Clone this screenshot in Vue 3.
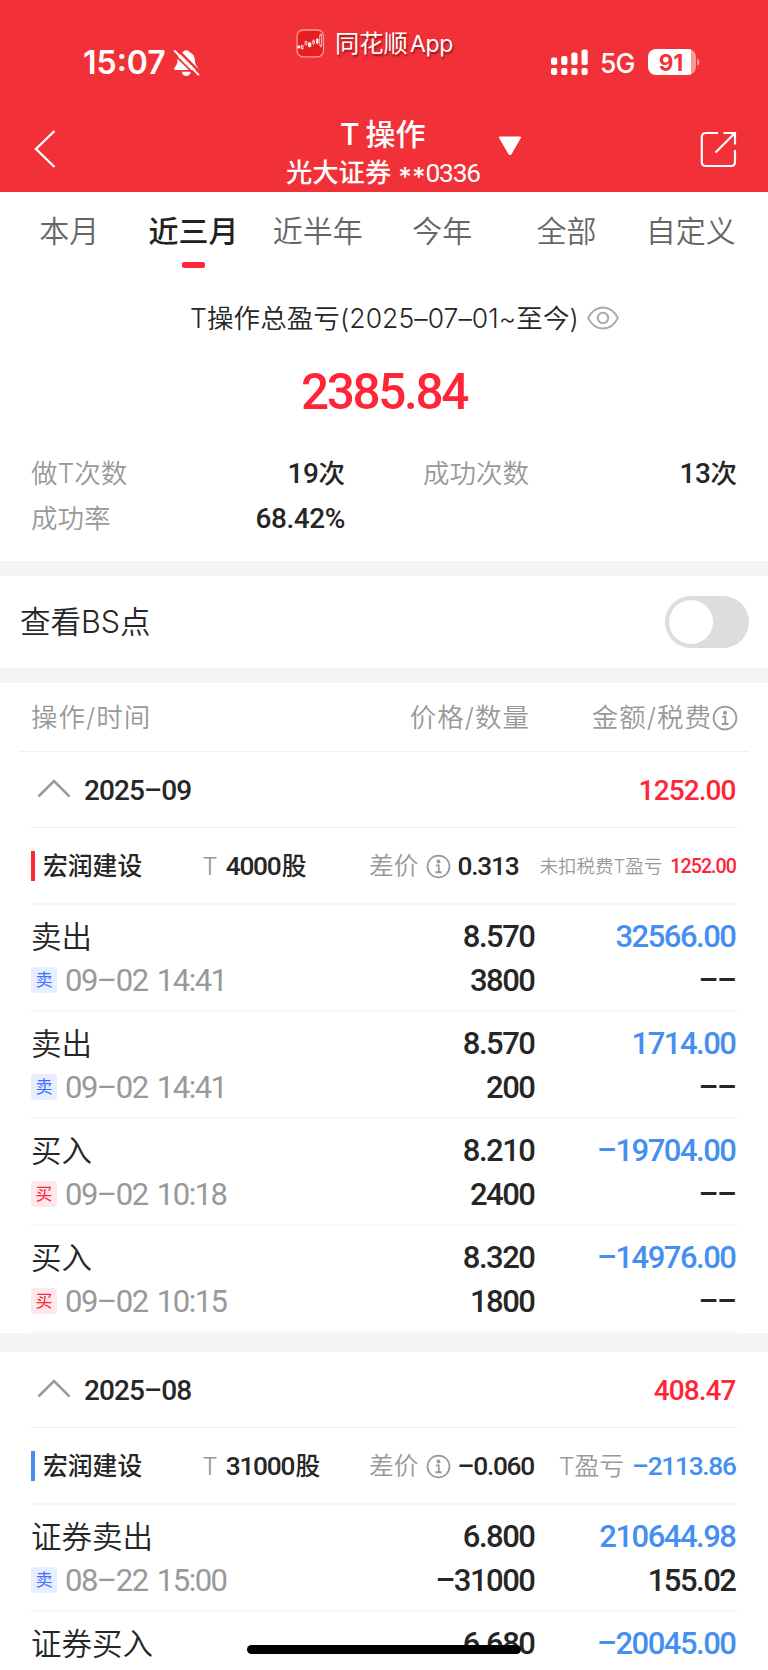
<template>
  <div class="page">
    <header class="header">
      <div class="status">
        <div class="status-left">
          <span class="clock">15:07</span>
          <svg class="bell" width="27" height="28" viewBox="0 0 27 28">
            <path d="M13.2 1.2c-2.3 0-3 1.3-3.4 2.1-3.5 1.2-5.2 4.3-5.3 8-.1 3.600-1 5-2.700 7-.9 1-1.100 2.700.4 2.700h22c1.500 0 1.300-1.700.4-2.700-1.700-2-2.600-3.400-2.700-7-.1-3.700-1.800-6.800-5.300-8-.4-.8-1.100-2.100-3.400-2.100z" fill="#fff" />
            <path d="M8.800 22.800h9c-.6 2.900-2.300 4.200-4.500 4.200s-3.900-1.300-4.500-4.200z" fill="#fff" />
            <path d="M3.400-.4 28 24.200" stroke="#f23038" stroke-width="2.400" />
            <path d="M1.700 2 25.400 25.600" stroke="#fff" stroke-width="2" stroke-linecap="round" />
            <path d="M-.2 3.800 23.700 27.700" stroke="#f23038" stroke-width="1.800" />
          </svg>
        </div>
        <div class="status-app">
          <svg width="29" height="29" viewBox="0 0 29 29">
            <rect x="1" y="1" width="26.500" height="26.800" rx="6" fill="#e81e20" stroke="#f99a9c" stroke-width="1.300" />
            <g fill="#fff" stroke="#fff" stroke-width=".7">
              <rect x="1.800" y="17" width="2.200" height="2" />
              <path d="M6.300 15.500v5.200M10 11.500v5M13.700 13v5.500M17.600 10.500v5.500M21.200 9v6.500M24.800 4.500v14" />
              <rect x="5.500" y="17" width="1.600" height="2.400" fill="#e81e20" />
              <rect x="9" y="12.800" width="2" height="2.600" fill="#e81e20" />
              <rect x="12.500" y="14" width="2.400" height="3.300" />
              <rect x="16.700" y="12" width="1.800" height="2.600" fill="#e81e20" />
              <rect x="20.400" y="10.500" width="1.700" height="3.500" />
              <rect x="23.800" y="6" width="2" height="10.500" fill="#e81e20" />
            </g>
          </svg>
          <span>同花顺<i>App</i></span>
        </div>
        <div class="status-right">
          <svg width="38" height="27" viewBox="0 0 38 27" fill="#fff">
            <rect x="0" y="8.500" width="6.200" height="7.500" rx="2" />
            <rect x="10.200" y="7" width="6.200" height="9" rx="2" />
            <rect x="20.300" y="3.500" width="6.200" height="12.500" rx="2" />
            <rect x="30.500" y=".5" width="6.200" height="15.500" rx="2" />
            <rect v-for="x in [0, 10.2, 20.3, 30.5]" :key="x" :x="x" y="19" width="6.200" height="7" rx="2" />
          </svg>
          <span class="network">5G</span>
          <div class="battery"><span>91</span></div>
          <svg class="cap" width="4" height="8" viewBox="0 0 4 8"><path d="M0 .5c3.300 1 3.300 6 0 7z" fill="#f9989b" /></svg>
        </div>
      </div>
      <div class="nav">
        <svg class="back" width="22" height="40" viewBox="0 0 22 40">
          <path d="M20.500 2 2 20l18.500 18" fill="none" stroke="#fff" stroke-width="2.300" />
        </svg>
        <div class="nav-title">
          <div class="title">T 操作</div>
          <div class="account">光大证券 <i>**</i><b class="num">0336</b></div>
        </div>
        <svg class="arrow" width="24" height="20" viewBox="0 0 24 20">
          <path d="M2 1.500h20L12.500 18h-1z" fill="#fff" stroke="#fff" stroke-width="2" stroke-linejoin="round" />
        </svg>
        <svg class="share" width="37" height="37" viewBox="0 0 37 37" fill="none" stroke="#fff" stroke-width="2.200">
          <path d="M18 2H6Q1.800 2 1.800 6v25q0 4 4 4H31q4 0 4-4V19" />
          <path d="M23.500 2H35v11.500M35 2 15.500 21.500" />
        </svg>
      </div>
    </header>

    <nav class="tabs">
      <div v-for="tab in tabs" :key="tab" :class="['tab', { active: tab === current }]" @click="current = tab">
        {{ tab }}
      </div>
    </nav>

    <section class="summary">
      <div class="summary-title">
        <span>T操作总盈亏(2025–07–01~至今)</span>
        <svg width="32" height="24" viewBox="0 0 32 24" fill="none" stroke="#aaa" stroke-width="1.800">
          <path d="M1 12C5 4.500 10 1.500 16 1.500S27 4.500 31 12c-4 7.500-9 10.500-15 10.500S5 19.500 1 12z" stroke-linejoin="round" />
          <circle cx="16" cy="12" r="5.200" stroke-width="2" />
        </svg>
      </div>
      <div class="total num">2385.84</div>
      <div class="stats">
        <div class="stat"><span>做T次数</span><b><span class="num">19</span>次</b></div>
        <div class="stat"><span>成功次数</span><b><span class="num">13</span>次</b></div>
        <div class="stat"><span>成功率</span><b><span class="num">68.42%</span></b></div>
      </div>
    </section>

    <section class="bs">
      <span>查看BS点</span>
      <div :class="['switch', { on: showBs }]" @click="showBs = !showBs"></div>
    </section>

    <div class="thead">
      <span>操作/时间</span>
      <span class="th-price">价格/数量</span>
      <span class="th-amount">金额/税费<svg width="26" height="26" viewBox="0 0 26 26"><use href="#info" /></svg></span>
    </div>

    <section v-for="m in months" :key="m.month" class="month">
      <div class="month-head">
        <svg width="34" height="20" viewBox="0 0 34 20">
          <path d="M1.500 18.500 17 3l15.500 15.500" fill="none" stroke="#999" stroke-width="2.500" />
        </svg>
        <span class="num">{{ m.month }}</span>
        <b class="num">{{ m.total }}</b>
      </div>
      <div class="stock">
        <i :class="['bar', m.color]"></i>
        <span class="stock-name">宏润建设</span>
        <span class="stock-qty"><em>T</em><span class="num">{{ m.qty }}</span>股</span>
        <span class="stock-diff">
          <em>差价</em>
          <svg width="25" height="25" viewBox="0 0 26 26"><use href="#info" /></svg>
          <span class="num">{{ m.diff }}</span>
        </span>
        <span :class="['stock-profit', { small: m.small }]"><em>{{ m.label }}</em><b :class="['num', m.color]">{{ m.profit }}</b></span>
      </div>
      <div v-for="(r, i) in m.records" :key="i" class="record">
        <div class="op">
          <div class="op-name">{{ r.name }}</div>
          <div v-if="r.time" class="op-time"><i :class="['tag', r.buy ? 'buy' : 'sell']">{{ r.buy ? '买' : '卖' }}</i><span class="num">{{ r.time }}</span></div>
        </div>
        <div class="price">
          <div class="num">{{ r.price }}</div>
          <div class="num">{{ r.qty }}</div>
        </div>
        <div class="amount">
          <div class="num blue">{{ r.amount }}</div>
          <div class="num">{{ r.fee }}</div>
        </div>
      </div>
    </section>

    <div class="home-bar"></div>

    <svg class="defs" width="0" height="0">
      <symbol id="info" viewBox="0 0 26 26">
        <circle cx="13" cy="13" r="11.400" fill="none" stroke="#999" stroke-width="1.800" />
        <circle cx="13" cy="7.800" r="2" fill="#999" />
        <path d="M10.200 11.800h3.100v7M9.800 19h6.600" fill="none" stroke="#999" stroke-width="1.900" />
      </symbol>
    </svg>
  </div>
</template>

<script setup>
import { ref } from 'vue'

const tabs = ['本月', '近三月', '近半年', '今年', '全部', '自定义']
const current = ref('近三月')
const showBs = ref(false)

const months = [
  {
    month: '2025–09',
    total: '1252.00',
    color: 'red',
    qty: '4000',
    diff: '0.313',
    label: '未扣税费T盈亏',
    profit: '1252.00',
    small: true,
    records: [
      { name: '卖出', time: '09–02 14:41', price: '8.570', qty: '3800', amount: '32566.00', fee: '––' },
      { name: '卖出', time: '09–02 14:41', price: '8.570', qty: '200', amount: '1714.00', fee: '––' },
      { name: '买入', buy: true, time: '09–02 10:18', price: '8.210', qty: '2400', amount: '–19704.00', fee: '––' },
      { name: '买入', buy: true, time: '09–02 10:15', price: '8.320', qty: '1800', amount: '–14976.00', fee: '––' },
    ],
  },
  {
    month: '2025–08',
    total: '408.47',
    color: 'blue',
    qty: '31000',
    diff: '–0.060',
    label: 'T盈亏',
    profit: '–2113.86',
    records: [
      { name: '证券卖出', time: '08–22 15:00', price: '6.800', qty: '–31000', amount: '210644.98', fee: '155.02' },
      { name: '证券买入', buy: true, price: '6.680', amount: '–20045.00' },
    ],
  },
]
</script>

<style>
html,
body {
  margin: 0;
  overflow: hidden;
}
</style>

<style scoped>
.page {
  position: relative;
  width: 768px;
  height: 1670px;
  overflow: hidden;
  background: #fff;
  color: #262626;
  font-family: Inter, 'Noto Sans CJK SC', sans-serif;
  font-size: 26.500px;
  font-weight: 350;
  line-height: 1;
  white-space: nowrap;
}

i,
em {
  font-style: normal;
}

svg {
  display: block;
  flex: none;
}

.num {
  margin-right: 0.050em;
  font-family: Roboto, 'Noto Sans CJK SC', sans-serif;
  letter-spacing: -0.048em;
}

.red {
  color: #ff2436;
}

.blue {
  color: #448ff0;
}

/* header */
.header {
  height: 191.500px;
  background: #f23038;
  color: #fff;
}

.status {
  display: grid;
  grid-template-columns: 296px 255px 1fr;
  height: 112px;
}

.status-left {
  display: flex;
  align-items: flex-start;
  padding: 47px 0 0 83px;
}

.clock {
  width: 90px;
  font: 600 32px/32px Inter, sans-serif;
}

.bell {
  margin-top: 2px;
}

.status-app {
  display: flex;
  align-items: flex-start;
  padding-top: 29px;
  gap: 10px;
  font-size: 24.300px;
  line-height: 29px;
  font-weight: 400;
  text-shadow: 1px 2px 2px rgba(90, 0, 0, 0.6);
}

.status-app i {
  margin-left: 2px;
  font-size: 23px;
  letter-spacing: -0.300px;
}

.status-right {
  display: flex;
  align-items: flex-start;
  padding-top: 49px;
}

.network {
  width: 48px;
  margin-left: 11px;
  font: 500 26.500px/29px Inter, sans-serif;
  letter-spacing: -1px;
}

.battery {
  width: 48px;
  height: 26px;
  border-radius: 8px;
  background: linear-gradient(90deg, #fff 43px, #f9989b 43px);
  color: #f23038;
  font: 700 22.500px/27px Inter, sans-serif;
  text-align: center;
}

.battery span {
  margin-right: 2px;
}

.cap {
  margin: 9px 0 0 1px;
}

.nav {
  display: flex;
  align-items: flex-start;
}

.back {
  margin: 17px 0 0 34px;
}

.nav-title {
  width: 194px;
  margin: 8px 0 0 230px;
}

.title {
  padding-left: 54px;
  font-size: 30px;
  font-weight: 500;
  line-height: 29px;
  word-spacing: -2px;
}

.account {
  margin-top: 10px;
  font-size: 26.300px;
  font-weight: 500;
  line-height: 28px;
}

.account i {
  vertical-align: -4px;
}

.account b {
  font-weight: 450;
}

.arrow {
  margin: 24px 0 0 18px;
}

.share {
  margin: 19px 0 0 178px;
}

/* tabs */
.tabs {
  display: grid;
  grid-template-columns: repeat(6, 1fr);
  height: 84.500px;
  padding: 0 15px 0 7px;
}

.tab {
  padding-top: 24px;
  color: #666;
  font-size: 30px;
  line-height: 30px;
  text-align: center;
}

.tab.active {
  color: #222;
  font-weight: 500;
}

.tab.active::after {
  content: '';
  display: block;
  width: 23px;
  height: 6px;
  margin: 16.500px auto 0;
  border-radius: 2px;
  background: #ff2436;
}

/* summary */
.summary {
  height: 284.500px;
}

.summary-title {
  display: flex;
  align-items: center;
  height: 84px;
  padding-left: 190px;
}

.summary-title span {
  width: 397px;
  letter-spacing: 0.100px;
}

.total {
  height: 82px;
  padding-left: 301px;
  color: #ff2436;
  font-size: 49.500px;
  font-weight: 500;
  line-height: 64px;
}

.stats {
  display: grid;
  grid-template-columns: 314px 314px;
  column-gap: 78px;
  grid-auto-rows: 45px;
  padding: 9px 31px 0;
}

.stat {
  display: flex;
  align-items: center;
  justify-content: space-between;
}

.stat > span {
  color: #999;
}

.stat b {
  font-weight: 500;
}

.stat .num {
  margin-right: 0;
  font-size: 28px;
  letter-spacing: -0.015em;
}

/* BS switch */
.bs {
  display: flex;
  align-items: center;
  justify-content: space-between;
  height: 92.500px;
  padding: 0 19px 0 20px;
  border-top: 15px solid #f4f4f4;
  border-bottom: 15px solid #f4f4f4;
  font-size: 30.500px;
}

.switch {
  width: 84px;
  height: 52px;
  padding: 4px;
  box-sizing: border-box;
  border-radius: 26px;
  background: #ddd;
}

.switch::before {
  content: '';
  display: block;
  width: 44px;
  height: 44px;
  border-radius: 50%;
  background: #fff;
}

.switch.on {
  background: #ff2436;
}

.switch.on::before {
  margin-left: auto;
}

/* table */
.thead {
  display: grid;
  grid-template-columns: 300px 199px 1fr;
  align-items: center;
  height: 67px;
  margin: 0 19px;
  padding: 1px 11px 0 12px;
  border-bottom: 1px solid #f0f0f0;
  color: #999;
  letter-spacing: 1px;
}

.th-price {
  text-align: right;
}

.th-amount {
  display: flex;
  align-items: center;
  justify-content: flex-end;
}

.month {
  padding: 0 31px;
  border-bottom: 19px solid #f4f4f4;
}

.month-head {
  display: flex;
  align-items: center;
  height: 75px;
  padding-left: 6px;
  border-bottom: 1px solid #eee;
  font-size: 28px;
  font-weight: 500;
}

.month-head svg {
  margin-bottom: 3px;
}

.month-head .num {
  letter-spacing: -0.032em;
}

.month-head span {
  margin-left: 13px;
  padding-top: 3px;
}

.month-head b {
  margin-left: auto;
  padding-top: 3px;
  color: #ff2436;
  font-weight: 500;
}

.stock {
  display: grid;
  grid-template-columns: 12px 159px 167px 1fr auto;
  align-items: center;
  height: 75px;
  border-bottom: 2px solid #f7f7f7;
  font-size: 24.800px;
  font-weight: 500;
}

.stock > span {
  padding-top: 2px;
}

.stock em {
  color: #999;
  font-weight: 350;
}

.stock .num {
  font-size: 1.060em;
}

.bar {
  width: 4px;
  height: 30px;
  background: currentColor;
}

.stock-qty em {
  margin-right: 8px;
}

.stock-diff {
  display: flex;
  align-items: center;
  gap: 7px;
}

.stock-profit em {
  margin-right: 8px;
}

.stock-profit b {
  font-weight: 500;
}

.stock-profit.small {
  font-size: 18.500px;
}

.record {
  display: grid;
  grid-template-columns: 304px 201px 1fr;
  height: 105px;
  border-bottom: 2px solid #f7f7f7;
  font-size: 31px;
  font-weight: 500;
}

.record > div {
  display: grid;
  grid-template-rows: 44px 44px;
  align-items: center;
  align-content: start;
  padding-top: 9px;
  text-align: right;
}

.record .op {
  text-align: left;
  font-weight: 350;
}

.op-name {
  padding-top: 2px;
  font-size: 30.500px;
}

.op-time {
  display: flex;
  align-items: center;
  color: #999;
  font-weight: 400;
  word-spacing: 3px;
}

.tag {
  width: 26px;
  height: 26px;
  margin-right: 8px;
  border-radius: 3px;
  font-size: 17px;
  line-height: 26px;
  text-align: center;
}

.tag.sell {
  background: #e8eeff;
  color: #3b6dff;
}

.tag.buy {
  background: #ffe8ea;
  color: #ff2436;
}

.home-bar {
  position: absolute;
  left: 247px;
  top: 1645px;
  width: 274px;
  height: 9px;
  border-radius: 5px;
  background: #000;
}

.defs {
  position: absolute;
}
</style>
